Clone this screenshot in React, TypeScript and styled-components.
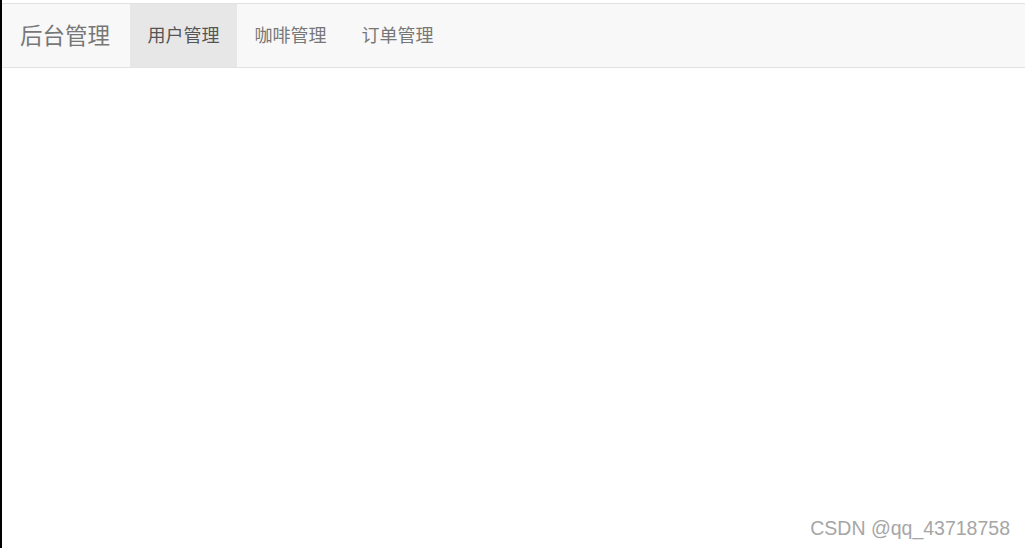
import styled, { createGlobalStyle } from 'styled-components';

const GlobalStyle = createGlobalStyle`
  html, body {
    margin: 0;
    padding: 0;
    background: #ffffff;
  }
  body {
    font-family: "Liberation Sans", "Noto Sans CJK SC", sans-serif;
  }
`;

const Page = styled.div`
  min-height: 100vh;
  box-sizing: border-box;
  border-left: 2px solid #000000;
  padding-top: 3px;
  position: relative;
  overflow: hidden;
`;

const Navbar = styled.nav`
  display: flex;
  align-items: stretch;
  height: 63px;
  background-color: #f8f8f8;
  border-top: 1px solid #e2e2e2;
  border-bottom: 1px solid #e2e2e2;
`;

const Brand = styled.a`
  display: flex;
  align-items: center;
  padding: 0 20px 4px 18px;
  font-family: "Noto Sans CJK SC", sans-serif;
  font-size: 22.5px;
  color: #777777;
  text-decoration: none;
`;

const NavList = styled.ul`
  display: flex;
  list-style: none;
  margin: 0;
  padding: 0;
`;

const NavItem = styled.li<{ $active?: boolean }>`
  display: flex;
  align-items: center;
  padding: 0 17.5px 4px;
  font-family: "Noto Sans CJK SC", sans-serif;
  font-size: 18px;
  color: ${(p) => (p.$active ? '#555555' : '#777777')};
  background-color: ${(p) => (p.$active ? '#e7e7e7' : 'transparent')};
  cursor: pointer;
`;

const Watermark = styled.div`
  position: absolute;
  right: 15px;
  bottom: 8px;
  font-family: "Liberation Sans", sans-serif;
  font-size: 19.5px;
  color: #a6a6a6;
  text-shadow: 0 0 1px #ffffff;
`;

const menus = ['用户管理', '咖啡管理', '订单管理'];

const App = () => {
  return (
    <>
      <GlobalStyle />
      <Page>
        <Navbar>
          <Brand>后台管理</Brand>
          <NavList>
            {menus.map((m, i) => (
              <NavItem key={m} $active={i === 0}>
                {m}
              </NavItem>
            ))}
          </NavList>
        </Navbar>
        <Watermark>CSDN @qq_43718758</Watermark>
      </Page>
    </>
  );
};

export default App;
